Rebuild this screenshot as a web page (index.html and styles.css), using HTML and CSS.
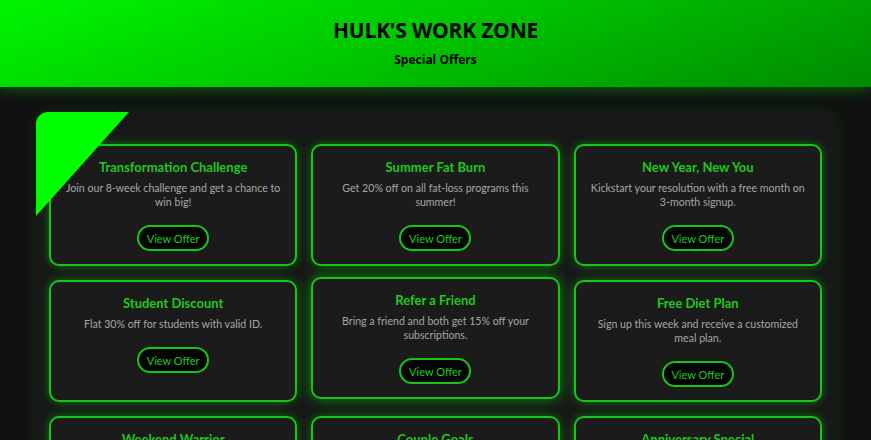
FILE: index.html
```html
<!DOCTYPE html>
<html lang="en">
<head>
<meta charset="utf-8">
<title>Hulk's Work Zone - Special Offers</title>
<link rel="stylesheet" href="styles.css">
</head>
<body>
<header class="site-header">
  <h1 class="site-title">HULK'S WORK ZONE</h1>
  <p class="site-subtitle">Special Offers</p>
</header>
<main class="page">
  <section class="offers">
    <div class="offer-grid">
      <article class="offer-card">
        <h3 class="offer-title">Transformation Challenge</h3>
        <p class="offer-desc">Join our 8-week challenge and get a chance to win big!</p>
        <button class="offer-btn">View Offer</button>
      </article>
      <article class="offer-card">
        <h3 class="offer-title">Summer Fat Burn</h3>
        <p class="offer-desc">Get 20% off on all fat-loss programs this summer!</p>
        <button class="offer-btn">View Offer</button>
      </article>
      <article class="offer-card">
        <h3 class="offer-title">New Year, New You</h3>
        <p class="offer-desc">Kickstart your resolution with a free month on 3-month signup.</p>
        <button class="offer-btn">View Offer</button>
      </article>
      <article class="offer-card">
        <h3 class="offer-title">Student Discount</h3>
        <p class="offer-desc">Flat 30% off for students with valid ID.</p>
        <button class="offer-btn">View Offer</button>
      </article>
      <article class="offer-card is-hover">
        <h3 class="offer-title">Refer a Friend</h3>
        <p class="offer-desc">Bring a friend and both get 15% off your subscriptions.</p>
        <button class="offer-btn">View Offer</button>
      </article>
      <article class="offer-card">
        <h3 class="offer-title">Free Diet Plan</h3>
        <p class="offer-desc">Sign up this week and receive a customized meal plan.</p>
        <button class="offer-btn">View Offer</button>
      </article>
      <article class="offer-card">
        <h3 class="offer-title">Weekend Warrior</h3>
        <p class="offer-desc">Train on weekends and get 10% off your membership.</p>
        <button class="offer-btn">View Offer</button>
      </article>
      <article class="offer-card">
        <h3 class="offer-title">Couple Goals</h3>
        <p class="offer-desc">Join with your partner and save 20% on both plans.</p>
        <button class="offer-btn">View Offer</button>
      </article>
      <article class="offer-card">
        <h3 class="offer-title">Anniversary Special</h3>
        <p class="offer-desc">Celebrate with us and get exclusive member perks.</p>
        <button class="offer-btn">View Offer</button>
      </article>
    </div>
  </section>
</main>
</body>
</html>
```
FILE: styles.css
```css
* { box-sizing: border-box; }
html, body { margin: 0; padding: 0; }
body {
  background: #111111;
  font-family: "Open Sans", "Noto Sans", sans-serif;
  color: #ddd;
  overflow: hidden;
}
.site-header {
  height: 87px;
  background: linear-gradient(160deg, #00f500 0%, #00c800 45%, #008a00 100%);
  box-shadow: 0 2px 14px rgba(0, 200, 0, 0.45);
  text-align: center;
  padding-top: 16px;
  position: relative;
  z-index: 2;
}
.site-title {
  margin: 0;
  font-size: 21px;
  font-weight: 700;
  color: #000;
  line-height: 28px;
  letter-spacing: -0.2px;
}
.site-subtitle {
  margin: 8px 0 0;
  font-size: 12px;
  font-weight: 700;
  color: #000;
  line-height: 16px;
}
.page {
  padding: 25px 36px 0;
}
.offers {
  position: relative;
  background: #171717;
  border-radius: 12px;
  padding: 32px 13px 20px;
  overflow: hidden;
  box-shadow: 0 0 16px rgba(0, 255, 0, 0.12);
}
.offers::before {
  content: "";
  position: absolute;
  left: 0;
  top: 0;
  width: 93px;
  height: 104px;
  background: #00ff00;
  clip-path: polygon(0 0, 100% 0, 0 100%);
  z-index: 3;
}
.offer-grid {
  display: grid;
  grid-template-columns: repeat(3, 1fr);
  gap: 14px 14px;
}
.offer-card {
  background: #1b1b1b;
  border: 2px solid #19c419;
  border-radius: 10px;
  box-shadow: 0 0 10px rgba(0, 230, 0, 0.45);
  padding: 13px 10px 14px;
  text-align: center;
  height: 122px;
  font-family: Lato, "Open Sans", sans-serif;
}
.offer-card.is-hover {
  transform: translateY(-3px);
  box-shadow: 0 0 14px rgba(0, 230, 0, 0.6);
}
.offer-title {
  margin: 0;
  font-size: 13px;
  font-weight: 700;
  line-height: 16px;
  color: #1ec81e;
}
.offer-desc {
  margin: 6px 0 0;
  font-size: 10.6px;
  line-height: 14px;
  color: #a6a6a6;
}
.offer-btn {
  margin-top: 16px;
  width: 72px;
  height: 26px;
  border: 2px solid #19c419;
  border-radius: 13px;
  background: #050505;
  color: #1ec81e;
  font-family: Lato, "Open Sans", sans-serif;
  font-size: 11px;
  padding: 0;
  cursor: pointer;
}
```
